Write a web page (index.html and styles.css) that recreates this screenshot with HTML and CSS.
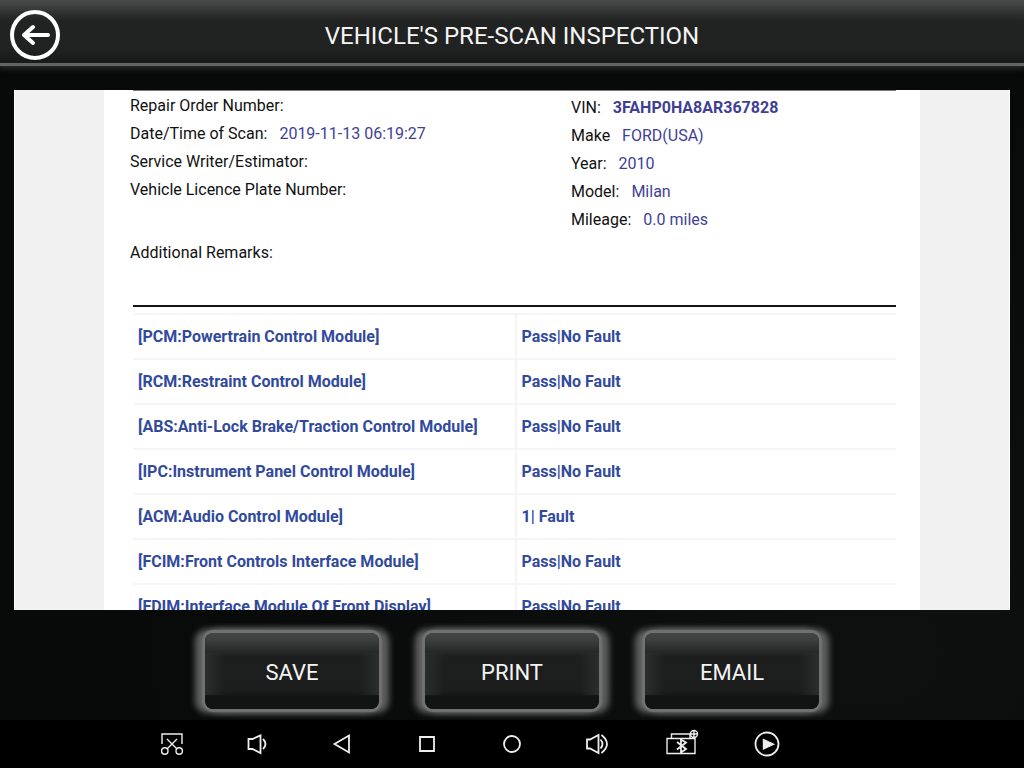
FILE: index.html
```html
<!DOCTYPE html>
<html lang="en">
<head>
<meta charset="utf-8">
<meta name="viewport" content="width=device-width, initial-scale=1">
<title>Vehicle's Pre-Scan Inspection</title>
<link rel="stylesheet" href="styles.css">
</head>
<body>
<header class="titlebar">
  <button class="back" aria-label="Back">
    <svg viewBox="0 0 52 52" width="52" height="52" fill="none" stroke="#fff" stroke-linecap="round" stroke-linejoin="round"><circle cx="26" cy="26" r="23" stroke-width="4"/><path d="M39 26H15M24 18l-9 8 9 8" stroke-width="4"/></svg>
  </button>
  <h1 class="title">VEHICLE'S PRE-SCAN INSPECTION</h1>
</header>
<main class="viewer">
  <article class="paper">
    <section class="details">
      <dl class="fields">
        <div class="field"><dt>Repair Order Number:</dt><dd></dd></div>
        <div class="field"><dt>Date/Time of Scan:</dt><dd>2019-11-13 06:19:27</dd></div>
        <div class="field"><dt>Service Writer/Estimator:</dt><dd></dd></div>
        <div class="field"><dt>Vehicle Licence Plate Number:</dt><dd></dd></div>
      </dl>
      <dl class="fields vehicle">
        <div class="field"><dt>VIN:</dt><dd class="vin">3FAHP0HA8AR367828</dd></div>
        <div class="field"><dt>Make</dt><dd>FORD(USA)</dd></div>
        <div class="field"><dt>Year:</dt><dd>2010</dd></div>
        <div class="field"><dt>Model:</dt><dd>Milan</dd></div>
        <div class="field"><dt>Mileage:</dt><dd>0.0 miles</dd></div>
      </dl>
    </section>
    <p class="remarks">Additional Remarks:</p>
    <table class="modules">
      <tbody>
        <tr><td>[PCM:Powertrain Control Module]</td><td>Pass|No Fault</td></tr>
        <tr><td>[RCM:Restraint Control Module]</td><td>Pass|No Fault</td></tr>
        <tr><td>[ABS:Anti-Lock Brake/Traction Control Module]</td><td>Pass|No Fault</td></tr>
        <tr><td>[IPC:Instrument Panel Control Module]</td><td>Pass|No Fault</td></tr>
        <tr><td>[ACM:Audio Control Module]</td><td>1| Fault</td></tr>
        <tr><td>[FCIM:Front Controls Interface Module]</td><td>Pass|No Fault</td></tr>
        <tr><td>[FDIM:Interface Module Of Front Display]</td><td>Pass|No Fault</td></tr>
      </tbody>
    </table>
  </article>
</main>
<div class="actions">
  <button class="action">SAVE</button>
  <button class="action">PRINT</button>
  <button class="action">EMAIL</button>
</div>
<nav class="sysbar" aria-label="System">
  <button class="sys" aria-label="Screenshot"><svg viewBox="0 0 32 32"><path d="M6 16V6h20v10M11 11l10 10M21 11L11 21"/><circle cx="8.800" cy="23" r="3.200"/><circle cx="23.200" cy="23" r="3.200"/></svg></button>
  <button class="sys" aria-label="Volume down"><svg viewBox="0 0 32 32"><path class="bold" d="M7.500 11h4l8-3.500v17.500l-8-4h-4zM22 11q5 5 0 10"/></svg></button>
  <button class="sys" aria-label="Back"><svg viewBox="0 0 32 32"><path class="bold" d="M23 7.500v17L8.500 16z"/></svg></button>
  <button class="sys" aria-label="Recents"><svg viewBox="0 0 32 32"><path class="bold" d="M9 9h14v14H9z"/></svg></button>
  <button class="sys" aria-label="Home"><svg viewBox="0 0 32 32"><circle class="bold" cx="16" cy="16" r="8"/></svg></button>
  <button class="sys" aria-label="Volume up"><svg viewBox="0 0 32 32"><path class="bold" d="M6 11.500h3l8.500-4.500v18L9 20.500H6zM19.500 11.500q4 4.500 0 9M20.500 7q11 9 0 18"/></svg></button>
  <button class="sys" aria-label="Bluetooth connection"><svg viewBox="0 0 32 32"><path d="M1 10.500h28v15H1zM5.500 10V6H24M24 6v4"/><path class="bold" d="M11 14l9 7-5 3.500V11.500l5 3-9 7"/><circle cx="28" cy="6" r="3.500"/><path d="M28 2.500v7M24.500 6h7"/></svg></button>
  <button class="sys" aria-label="Play"><svg viewBox="0 0 32 32"><circle class="bold" cx="16" cy="16" r="11.500"/><path d="M12.500 11.500v9.500l10-4.700z" fill="#eee"/></svg></button>
</nav>
</body>
</html>
```
FILE: styles.css
```css
* { box-sizing: border-box; }

body {
  margin: 0;
  height: 100vh;
  display: flex;
  flex-direction: column;
  background: radial-gradient(ellipse at 85% 85%, #0e1010, #080909 60%);
  font-family: Roboto, "Liberation Sans", sans-serif;
  font-size: 16px;
  color: #111;
}

button {
  padding: 0;
  border: 0;
  background: none;
  color: inherit;
  font: inherit;
}

.titlebar {
  display: grid;
  grid-template-columns: 60px 1fr 60px;
  align-items: center;
  height: 66px;
  padding: 0 9px;
  background: linear-gradient(#484a49, #434544 4px, #2a2c2b 15px, #212322 22px, #212322 48px, #191b1a 60px);
  border-bottom: 3px solid #626463;
  box-shadow: 0 1px 6px 1px #303332;
}

.back { height: 52px; margin-top: 6px; text-align: left; }
.back svg { display: block; }

.title {
  margin: 8px 0 0;
  color: #f4f4f4;
  font-size: 24px;
  font-weight: 400;
  line-height: 32px;
  text-align: center;
}

.viewer {
  flex: 1;
  min-height: 0;
  margin: 24px 14px 0;
  padding: 0 89px;
  overflow-y: auto;
  scrollbar-width: none;
  background: #f1f1f1;
  border-left: 1px solid #fff;
  border-right: 1px solid #fff;
}

.paper {
  min-height: 100%;
  padding: 0 24px 0 29px;
  background: #fff;
}

.details {
  display: grid;
  grid-template-columns: 438px 1fr;
  border-top: 1px solid #777;
}

.fields { margin: 1px 0 0 -3px; line-height: 28px; }
.vehicle { margin: 3px 0 0; }
.field { display: flex; gap: 12px; }
.field dd { margin: 0; color: #3f3f96; }
.field .vin { font-weight: 700; }

.remarks {
  margin: 5px 0 0 -3px;
  min-height: 66px;
  line-height: 28px;
}

.modules {
  width: 100%;
  border-top: 2px solid #151515;
  border-spacing: 0;
  padding-top: 6px;
  table-layout: fixed;
  color: #324a9c;
  font-weight: 700;
}

.modules td {
  height: 45px;
  padding: 0 5px;
  border-top: 2px solid #f5f5f5;
}

.modules td + td { border-left: 2px solid #f5f5f5; }

.actions {
  display: flex;
  justify-content: center;
  gap: 46px;
  height: 110px;
  padding-top: 23px;
}

.action {
  width: 174px;
  height: 76px;
  padding-top: 2px;
  border-radius: 8px;
  background:
    linear-gradient(90deg, #2b2d2c, #2b2d2c00 20px, #2b2d2c00 154px, #2b2d2c) 0 20px / 100% 42px no-repeat,
    linear-gradient(#454746, #3b3d3c 8px, #1d1f1e 24px, #1c1e1d 58px, #121413 64px);
  box-shadow: 0 0 1px 3px #707170, -6px 0 6px 4px #606160, 6px 0 6px 4px #606160;
  color: #f4f4f4;
  font-size: 22px;
}

.sysbar {
  display: flex;
  justify-content: center;
  gap: 53px;
  height: 48px;
  padding-right: 86px;
  align-items: center;
  background: #000;
}

.sys { width: 32px; height: 32px; }

.sys svg {
  display: block;
  width: 32px;
  height: 32px;
  overflow: visible;
  fill: none;
  stroke: #eee;
  stroke-width: 1.4;
}

.sys .bold { stroke-width: 1.8; }
```
